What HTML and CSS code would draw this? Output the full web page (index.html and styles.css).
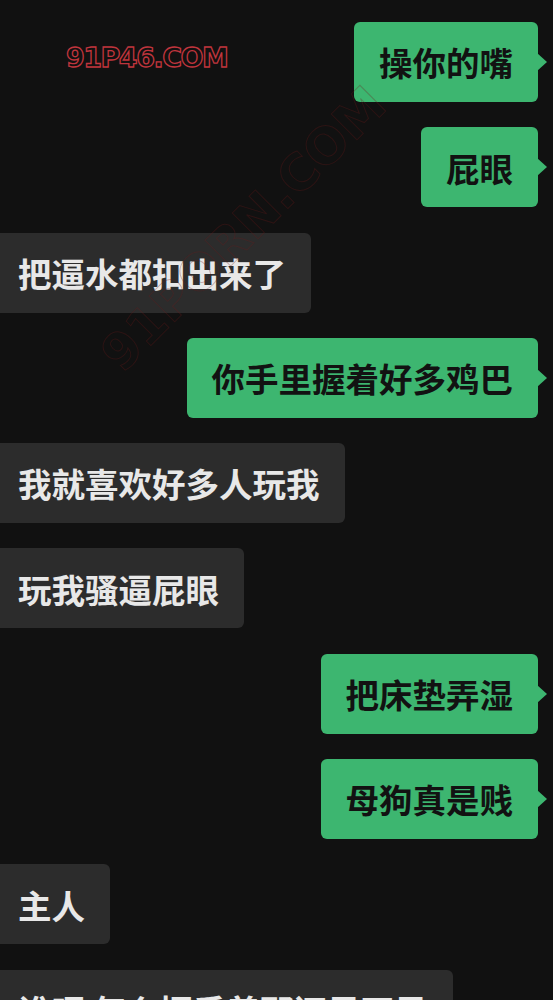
FILE: index.html
```html
<!DOCTYPE html>
<html lang="zh">
<head>
    <meta charset="UTF-8">
    <meta name="viewport" content="width=device-width, initial-scale=1.0">
    <title>聊天</title>
    <link rel="stylesheet" href="styles.css">
</head>
<body>
    <div class="chat">
        <div class="row right"><div class="bubble me">操你的嘴</div></div>
        <div class="row right"><div class="bubble me">屁眼</div></div>
        <div class="row left"><div class="bubble other">把逼水都扣出来了</div></div>
        <div class="row right"><div class="bubble me">你手里握着好多鸡巴</div></div>
        <div class="row left"><div class="bubble other">我就喜欢好多人玩我</div></div>
        <div class="row left"><div class="bubble other">玩我骚逼屁眼</div></div>
        <div class="row right"><div class="bubble me">把床垫弄湿</div></div>
        <div class="row right"><div class="bubble me">母狗真是贱</div></div>
        <div class="row left"><div class="bubble other">主人</div></div>
        <div class="row left"><div class="bubble other">谁呀 怎么握手着那还是不是</div></div>
    </div>

    <div class="mark">91P46.COM</div>
    <div class="mark-diag">91PORN.COM</div>
</body>
</html>
```

FILE: styles.css
```css
body {
    margin: 0;
    background-color: #111111;
    font-family: "Noto Sans CJK SC", "Noto Sans", sans-serif;
    overflow: hidden;
    height: 1000px;
}
.chat {
    display: flex;
    flex-direction: column;
    gap: 25.3px;
    padding: 22px 15px 0 0;
}
.row {
    display: flex;
}
.right {
    justify-content: flex-end;
}
.left {
    justify-content: flex-start;
}
.bubble {
    position: relative;
    height: 80px;
    display: flex;
    align-items: center;
    font-size: 33.5px;
    font-weight: 700;
    line-height: 1;
    border-radius: 6px;
    white-space: nowrap;
}
.me {
    background-color: #3db670;
    color: #121212;
    padding: 0 25px;
}
.me::after {
    content: "";
    position: absolute;
    right: -9px;
    top: 31px;
    border-top: 9px solid transparent;
    border-bottom: 9px solid transparent;
    border-left: 10px solid #3db670;
}
.other {
    background-color: #2c2c2c;
    color: #e8e8e8;
    margin-left: -10px;
    padding: 0 25px 0 28px;
}
.mark {
    position: absolute;
    left: 66px;
    top: 42px;
    font-family: "DejaVu Sans", sans-serif;
    font-weight: 700;
    font-size: 27px;
    letter-spacing: -1.5px;
    color: transparent;
    -webkit-text-stroke: 1.3px #c0353d;
}
.mark-diag {
    position: absolute;
    left: 55px;
    top: 200px;
    font-family: "DejaVu Sans", sans-serif;
    font-weight: 700;
    font-size: 50px;
    color: transparent;
    -webkit-text-stroke: 1px rgba(110, 25, 25, 0.3);
    transform: rotate(-45deg);
    transform-origin: center;
}
```
